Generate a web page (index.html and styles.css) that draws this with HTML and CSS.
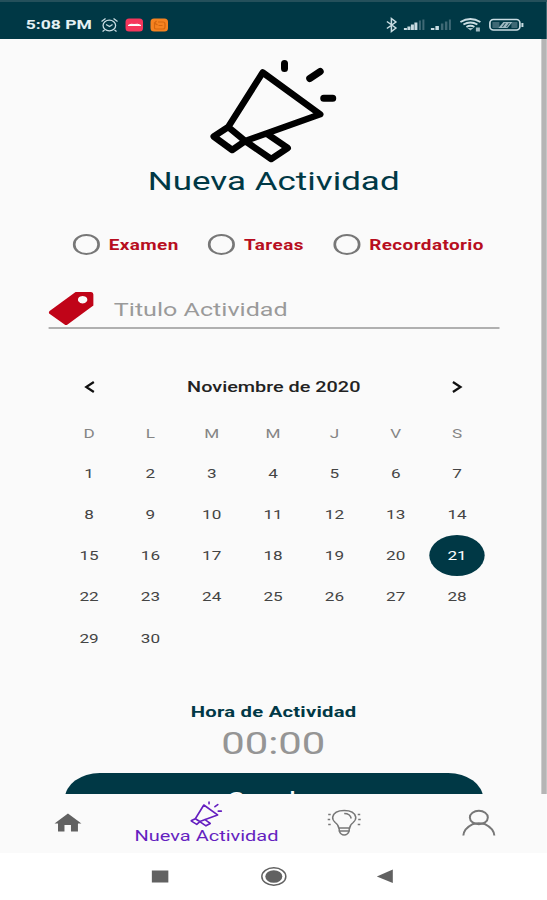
FILE: index.html
```html
<!DOCTYPE html>
<html lang="es">
<head>
    <meta charset="UTF-8">
    <meta name="viewport" content="width=device-width, initial-scale=1.0">
    <title>Nueva Actividad</title>
    <link rel="stylesheet" href="styles.css">
</head>
<body>
    <div class="phone">
        <!-- Status bar -->
        <header class="status-bar">
            <span class="clock">5:08 PM</span>
            <svg class="status-left" viewBox="98 16 72 18" preserveAspectRatio="none">
                <g fill="none" stroke="#c9dce2" stroke-width="1.3">
                    <ellipse cx="108.8" cy="25.5" rx="6.3" ry="5.4"/>
                    <path d="M101 21.5l4-3M117 21.5l-4-3M105.500 24.5l3.5 2 3-2M104 30l-2 1.5M114 30l2 1.5"/>
                </g>
                <rect x="125" y="18.5" width="17.5" height="13" rx="3.5" fill="#f5365c"/>
                <path d="M127.5 25.5q3-2 6-1 4-1 7 1z" fill="#fff" stroke="#fff"/>
                <rect x="150" y="18.5" width="17.5" height="13" rx="3.5" fill="#f58220"/>
                <path d="M154 23v5q0 1 1.5 1h7q2 0 2-2v-3q0-2-2-2h-5M156 21l-2 2 3 2M158 25.5h4" fill="none" stroke="#d4660f" stroke-width="1.2"/>
            </svg>
            <svg class="status-right" viewBox="384 16 142 18" preserveAspectRatio="none">
                <path d="M387.5 21.5l9 6.5-4.5 3.5v-13l4.5 3.5-9 6.5" fill="none" stroke="#c9dce2" stroke-width="1.5"/>
                <g fill="#c9dce2">
                    <path d="M404.5 28h3v2h-3zM408 26.5h3v3.5h-3zM411.500 24.5h3v5.5h-3zM415 22.5h3v7.5h-3z"/>
                    <path d="M431.5 28h3.5v2h-3.5zM436 26h3.5v4h-3.5z"/>
                </g>
                <path d="M419.5 20.5h2v9.5h-2zM423 19.5h2v10.5h-2zM441.5 23.5h2.5v6.5h-2.5zM445.5 21.5h2.5v8.5h-2.5zM449.5 19.5h2v10.5h-2z" fill="#3f6975"/>
                <g fill="none" stroke="#c9dce2" stroke-width="1.9">
                    <path d="M461 22q10-6 20 0M464 24.5q7-4 14 0M467 27q4-2.5 8 0"/>
                </g>
                <path d="M468 28h6l-3 2.5zM476.5 27.5h4v4h-4z" fill="#9fbac2"/>
                <rect x="490.5" y="19.5" width="30" height="10.5" rx="3.5" fill="none" stroke="#c9dce2" stroke-width="1.7"/>
                <path d="M493 22h7v6h-7zM512 22h6v6h-6z" fill="#3f6975"/>
                <path d="M499 28l5-6h9l-5 6z" fill="#9fbac2"/>
                <path d="M503 27l3-4M507 27l3-4" stroke="#24505b"/>
                <rect x="522" y="23" width="2" height="4" fill="#c9dce2"/>
            </svg>
        </header>

        <main class="content">
            <svg class="megaphone" viewBox="205 55 137 110" preserveAspectRatio="none">
                <g fill="none" stroke="#000" stroke-width="6.5" stroke-linejoin="round" stroke-linecap="round">
                    <path d="M228 127L262.5 72.5 320 114.3 245 141zM228 127L213.5 136.5 232 150 245 141 271 159 287.5 148 267 134"/>
                    <path stroke-width="7" d="M284.3 63.5v5M309.5 78.5l10.5-7M323.5 98.3h9"/>
                </g>
            </svg>
            <h1>Nueva Actividad</h1>

            <div class="types">
                <label class="type"><i class="radio"></i><span>Examen</span></label>
                <label class="type"><i class="radio"></i><span>Tareas</span></label>
                <label class="type"><i class="radio"></i><span>Recordatorio</span></label>
            </div>

            <div class="title-field">
                <svg class="tag" viewBox="48 291 47 35" preserveAspectRatio="none">
                    <path fill-rule="evenodd" fill="#c00418" d="M75 292H90.5Q92.8 292 92.8 294.5V305.5L67 324.5Q65.5 325.5 64 324.5L48.5 313.5Q47.5 312.3 49 311zM82 296a4.7 3.7 0 1 0 .1 0z"/>
                </svg>
                <span>Titulo Actividad</span>
            </div>

            <section class="calendar">
                <div class="month">
                    <svg class="arrow" viewBox="0 0 12 14" preserveAspectRatio="none"><path d="M10 2L2.5 7 10 12"/></svg>
                    <span>Noviembre de 2020</span>
                    <svg class="arrow" viewBox="0 0 12 14" preserveAspectRatio="none"><path d="M2 2l7.5 5L2 12"/></svg>
                </div>
                <div class="weekdays">
                    <span>D</span><span>L</span><span>M</span><span>M</span><span>J</span><span>V</span><span>S</span>
                </div>
                <div class="days">
                    <span>1</span><span>2</span><span>3</span><span>4</span><span>5</span><span>6</span><span>7</span>
                    <span>8</span><span>9</span><span>10</span><span>11</span><span>12</span><span>13</span><span>14</span>
                    <span>15</span><span>16</span><span>17</span><span>18</span><span>19</span><span>20</span><span class="selected">21</span>
                    <span>22</span><span>23</span><span>24</span><span>25</span><span>26</span><span>27</span><span>28</span>
                    <span>29</span><span>30</span>
                </div>
            </section>

            <h2>Hora de Actividad</h2>
            <div class="time">00:00</div>
            <button class="save">Guardar</button>
        </main>

        <!-- App navigation -->
        <nav class="tabs">
            <div class="tab tab-home">
                <svg class="home" viewBox="54 813 28 19" preserveAspectRatio="none">
                    <path d="M68 813.5L81.5 823.5H78V831.5H71V825H64.5V831.5H58V823.5H54.5z" fill="#616161"/>
                </svg>
            </div>
            <div class="tab tab-active">
                <svg class="mini-megaphone" viewBox="205 55 137 110" preserveAspectRatio="none">
                    <g fill="none" stroke="#651fc0" stroke-width="7" stroke-linejoin="round" stroke-linecap="round">
                        <path d="M226 130L262 72 320 114 245 142zM226 130L208 139 232 154 245 142 271 160 289 150 267 134"/>
                        <path d="M284 60v7M309 79l12-9M323 98h13"/>
                    </g>
                </svg>
                <span>Nueva Actividad</span>
            </div>
            <div class="tab tab-ideas">
                <svg class="bulb" viewBox="327 809 36 28" preserveAspectRatio="none">
                    <g fill="none" stroke="#777" stroke-width="1.5">
                        <path d="M339 828q0-3-3.5-5.5-3-3-2.5-5.5 1.5-6.5 11.5-6.5T356 817q.5 2.5-2.5 5.5-3.5 2.5-3.5 5.5z"/>
                        <path d="M339.5 828v3q1.5 4 5 4t5-4v-3M340 831h9.5M344.5 813.5q6 0 7 5"/>
                        <path d="M328.5 814.5h2.5M328 819.5h2.5M328.5 824.5h2.5M358 814.5h2.5M358.5 819.5h2.5M358 824.5h2.5"/>
                    </g>
                </svg>
            </div>
            <div class="tab tab-profile">
                <svg class="person" viewBox="460 808 37 29" preserveAspectRatio="none">
                    <g fill="none" stroke="#777" stroke-width="2">
                        <ellipse cx="478.5" cy="817.5" rx="9" ry="6.7"/>
                        <path d="M463 835.5q.5-7 9-11.2 6.500-2 13 0 8.500 4.200 9 11.200"/>
                    </g>
                </svg>
            </div>
        </nav>

        <!-- System buttons -->
        <footer class="system-bar">
            <svg class="system-icons" viewBox="150 866 246 21" preserveAspectRatio="none">
                <rect x="152" y="870.5" width="16.5" height="12" fill="#616161"/>
                <ellipse cx="274" cy="876.5" rx="12" ry="8.8" fill="none" stroke="#616161" stroke-width="1.5"/>
                <ellipse cx="274" cy="876.5" rx="8.5" ry="6.3" fill="#616161"/>
                <path d="M377 876.5L393 869.5V883z" fill="#616161"/>
            </svg>
        </footer>
    </div>
</body>
</html>
```
FILE: styles.css
```css
* {
    box-sizing: border-box;
}

body {
    margin: 0;
    overflow: hidden;
    background-color: #fff;
    font-family: Roboto, "Liberation Sans", sans-serif;
}

.phone {
    display: flex;
    flex-direction: column;
    width: 405.2px;
    height: 900px;
    transform: scaleX(1.35);
    transform-origin: 0 0;
}

svg {
    display: block;
    flex: none;
}

.status-bar {
    display: flex;
    align-items: flex-start;
    flex: none;
    height: 39px;
    padding: 14px 16px 0 19px;
    background-color: #003845;
    border-top: 2px solid #24505b;
}

.clock {
    width: 53.6px;
    font-size: 13px;
    line-height: 18px;
    font-weight: 700;
    color: #e4f0f3;
    white-space: nowrap;
}

.status-left {
    width: 53.3px;
    height: 18px;
}

.status-right {
    width: 105.2px;
    height: 18px;
    margin-left: auto;
}

.content {
    display: flex;
    flex-direction: column;
    flex: none;
    height: 755px;
    padding: 16px 30px 0 35.5px;
    overflow: hidden;
    background-color: #fafafa;
    border-right: 4px solid #b5b5b5;
}

.megaphone {
    width: 101.5px;
    height: 110px;
    margin-left: 116.4px;
}

h1 {
    margin: 0 0 0 74px;
    font-size: 25.9px;
    line-height: 33px;
    font-weight: 400;
    color: #003845;
    white-space: nowrap;
}

.types {
    display: flex;
    gap: 21.5px;
    height: 22px;
    margin-top: 36px;
    padding-left: 18px;
}

.type {
    display: flex;
    align-items: center;
    gap: 6.5px;
    font-size: 14px;
    font-weight: 700;
    letter-spacing: 0.3px;
    color: #b70d20;
    white-space: nowrap;
}

.type span {
    padding-top: 1px;
}

.radio {
    width: 20.5px;
    height: 20.5px;
    border: 2px solid #777;
    border-radius: 50%;
}

.title-field {
    display: flex;
    gap: 14px;
    width: 334px;
    height: 38px;
    margin-top: 36px;
    border-bottom: 2px solid #b0b0b0;
    font-size: 18.6px;
    line-height: 38px;
    color: #9a9a9a;
    white-space: nowrap;
}

.tag {
    width: 34.8px;
    height: 35px;
}

.calendar {
    width: 318px;
    margin: 45px 0 0 7.8px;
}

.month {
    display: flex;
    align-items: center;
    justify-content: space-between;
    height: 26px;
    padding: 0 18px 0 19px;
    font-size: 14.7px;
    font-weight: 500;
    color: #222;
}

.arrow {
    width: 9px;
    height: 14px;
    fill: none;
    stroke: #111;
    stroke-width: 2.2;
}

.weekdays, .days {
    display: grid;
    grid-template-columns: repeat(7, 1fr);
    justify-items: center;
    align-items: center;
    font-size: 12.7px;
}

.weekdays {
    height: 34px;
    margin-top: 17px;
    color: #858585;
}

.days {
    grid-auto-rows: 41.25px;
    margin-top: 2px;
    color: #444;
}

.selected {
    width: 41px;
    height: 41px;
    line-height: 41px;
    border-radius: 50%;
    text-align: center;
    background-color: #003845;
    color: #fff;
}

h2 {
    margin: 43px 0 0 105.8px;
    font-size: 15px;
    line-height: 20px;
    font-weight: 700;
    letter-spacing: 0.17px;
    color: #003845;
    white-space: nowrap;
}

.time {
    margin-left: 128.3px;
    font-size: 31px;
    line-height: 44px;
    color: #959595;
}

.save {
    flex: none;
    width: 310px;
    height: 52px;
    margin: 7px 0 0 12px;
    padding: 0;
    border: none;
    border-radius: 26px;
    background-color: #003845;
    color: #fff;
    font: 500 18px Roboto, sans-serif;
    letter-spacing: 0.4px;
}

.tabs {
    display: flex;
    flex: none;
    height: 59px;
    background-color: #fafafa;
}

.tab {
    display: flex;
    flex-direction: column;
    align-items: center;
}

.tab-home {
    width: 100.5px;
    padding-top: 19px;
}

.tab-active {
    width: 105px;
    padding-top: 7px;
    font-size: 14.8px;
    line-height: 19px;
    color: #651fc0;
    white-space: nowrap;
}

.tab-ideas {
    width: 99.5px;
    padding-top: 15px;
}

.tab-profile {
    width: 100px;
    padding-top: 14px;
}

.home {
    width: 20.7px;
    height: 19px;
}

.mini-megaphone {
    width: 24px;
    height: 26px;
}

.bulb {
    width: 26.7px;
    height: 28px;
}

.person {
    width: 27.4px;
    height: 29px;
}

.system-bar {
    flex: none;
    height: 47px;
    padding: 13px 0 0 111.1px;
    background-color: #fff;
}

.system-icons {
    width: 182.2px;
    height: 21px;
}
```
